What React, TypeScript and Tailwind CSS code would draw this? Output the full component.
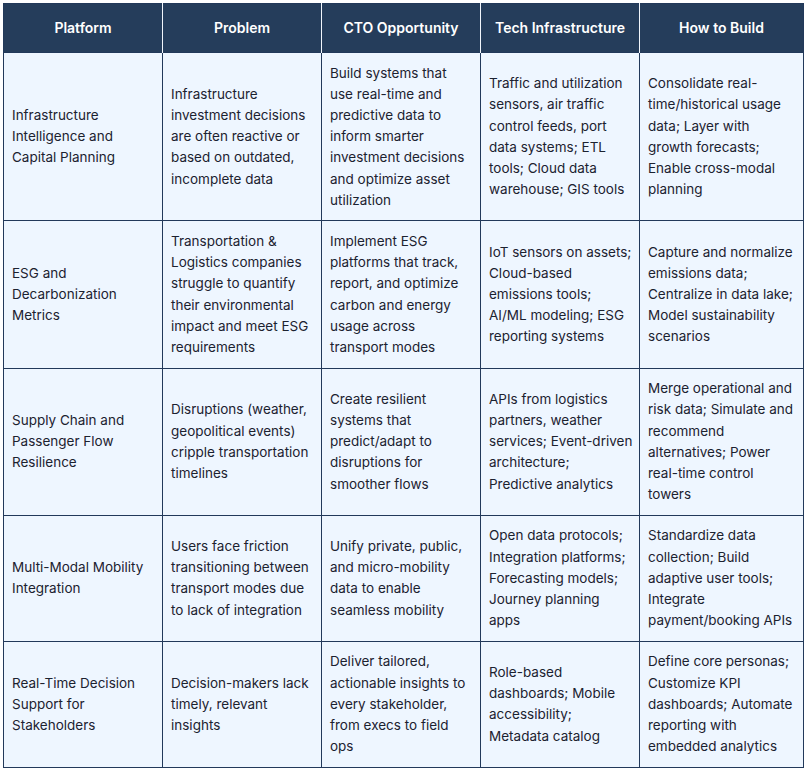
const headers = ["Platform", "Problem", "CTO Opportunity", "Tech Infrastructure", "How to Build"];

const rows: string[][] = [
  [
    "Infrastructure Intelligence and Capital Planning",
    "Infrastructure investment decisions are often reactive or based on outdated, incomplete data",
    "Build systems that use\u00a0real-time and predictive data to inform smarter investment decisions and optimize asset utilization",
    "Traffic and utilization sensors, air traffic control feeds, port data systems; ETL tools; Cloud data warehouse; GIS tools",
    "Consolidate real-time/historical usage data; Layer with growth forecasts; Enable cross-modal planning",
  ],
  [
    "ESG and Decarbonization Metrics",
    "Transportation & Logistics companies struggle to quantify their environmental impact and meet ESG requirements",
    "Implement ESG platforms that track, report, and optimize carbon and energy usage across transport modes",
    "IoT sensors on assets; Cloud-based emissions tools; AI/ML\u00a0modeling; ESG reporting systems",
    "Capture and normalize emissions data; Centralize in data lake; Model sustainability scenarios",
  ],
  [
    "Supply Chain and Passenger Flow Resilience",
    "Disruptions (weather, geopolitical events) cripple transportation timelines",
    "Create resilient systems that predict/adapt to disruptions for smoother flows",
    "APIs from logistics partners, weather services; Event-driven architecture; Predictive analytics",
    "Merge operational and risk data; Simulate and recommend alternatives; Power real-time control towers",
  ],
  [
    "Multi-Modal Mobility Integration",
    "Users face friction transitioning between transport modes due to lack of integration",
    "Unify private, public, and micro-mobility data to enable seamless mobility",
    "Open data protocols; Integration platforms; Forecasting models; Journey planning apps",
    "Standardize data collection; Build adaptive user tools; Integrate payment/booking APIs",
  ],
  [
    "Real-Time Decision Support for Stakeholders",
    "Decision-makers lack timely, relevant insights",
    "Deliver tailored, actionable insights to every stakeholder, from execs to field ops",
    "Role-based dashboards; Mobile accessibility; Metadata catalog",
    "Define core personas; Customize KPI dashboards; Automate reporting with embedded analytics",
  ],
];

export default function App() {
  return (
    <div className="min-h-screen bg-white p-[3px] font-['Inter','Liberation_Sans',sans-serif]">
      <table className="w-[800px] table-fixed border-collapse border border-[#22395a] bg-[#eef6ff]">
        <colgroup>
          <col className="w-[159px]" />
          <col className="w-[159px]" />
          <col className="w-[159px]" />
          <col className="w-[159px]" />
          <col className="w-[164px]" />
        </colgroup>
        <thead>
          <tr className="bg-[#253d5b]">
            {headers.map((h) => (
              <th
                key={h}
                className="border-x border-x-[#f1f5fb] first:border-l-[#22395a] last:border-r-[#22395a] px-2 py-[13px] text-center text-[14px] leading-[22px] font-semibold text-white"
              >
                {h}
              </th>
            ))}
          </tr>
        </thead>
        <tbody>
          {rows.map((row, i) => (
            <tr key={i}>
              {row.map((cell, j) => (
                <td
                  key={j}
                  className="border border-[#22395a] pl-2 pr-[6px] py-[9.5px] align-middle text-[13.5px] leading-[21.2px] text-[#1c2230]"
                >
                  {cell}
                </td>
              ))}
            </tr>
          ))}
        </tbody>
      </table>
    </div>
  );
}
